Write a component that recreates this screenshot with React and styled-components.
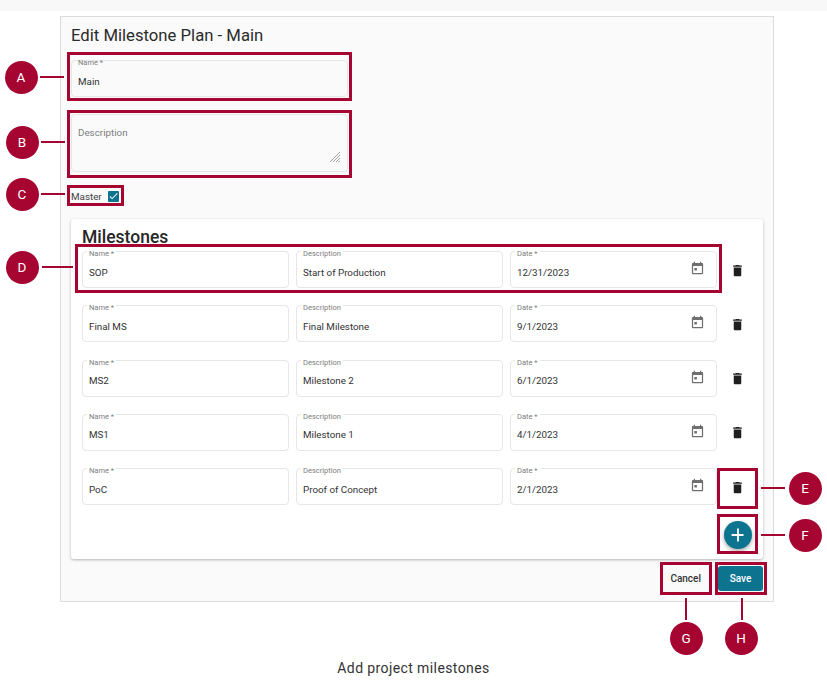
import React from "react";
import styled, { createGlobalStyle } from "styled-components";

const GlobalStyle = createGlobalStyle`
  html, body {
    margin: 0;
    padding: 0;
    background: #ffffff;
    font-family: Roboto, "Liberation Sans", sans-serif;
  }
`;

//data
const milestones = [
  { name: "SOP", description: "Start of Production", date: "12/31/2023" },
  { name: "Final MS", description: "Final Milestone", date: "9/1/2023" },
  { name: "MS2", description: "Milestone 2", date: "6/1/2023" },
  { name: "MS1", description: "Milestone 1", date: "4/1/2023" },
  { name: "PoC", description: "Proof of Concept", date: "2/1/2023" },
];

const frames = [
  { x: 67, y: 52, w: 285, h: 49 },
  { x: 67, y: 110, w: 285, h: 68 },
  { x: 67, y: 185, w: 57, h: 21 },
  { x: 75, y: 244, w: 647, h: 49 },
  { x: 717, y: 468, w: 41, h: 41 },
  { x: 717, y: 514, w: 41, h: 40 },
  { x: 660, y: 562, w: 52, h: 33 },
  { x: 715, y: 562, w: 52, h: 33 },
];

const leaders = [
  { x: 40, y: 76, w: 24, h: 2 },
  { x: 41, y: 141, w: 24, h: 2 },
  { x: 41, y: 193, w: 24, h: 2 },
  { x: 42, y: 266, w: 31, h: 2 },
  { x: 761, y: 487, w: 24, h: 2 },
  { x: 761, y: 534, w: 24, h: 2 },
  { x: 685, y: 598, w: 2, h: 22 },
  { x: 741, y: 598, w: 2, h: 22 },
];

const callouts = [
  { letter: "A", x: 21, y: 77 },
  { letter: "B", x: 22, y: 142 },
  { letter: "C", x: 22, y: 194 },
  { letter: "D", x: 22, y: 267 },
  { letter: "E", x: 805, y: 488 },
  { letter: "F", x: 805, y: 535 },
  { letter: "G", x: 686, y: 638 },
  { letter: "H", x: 741, y: 638 },
];

//icons
const TrashIcon = () => (
  <svg width="15" height="15" viewBox="0 0 24 24" fill="#1f1f1f">
    <path d="M6 19c0 1.1.9 2 2 2h8c1.1 0 2-.9 2-2V7H6v12zM19 4h-3.5l-1-1h-5l-1 1H5v2h14V4z" />
  </svg>
);

const CalendarIcon = () => (
  <svg width="15" height="15" viewBox="0 0 24 24" fill="#6f6f6f">
    <path d="M19 3h-1V1h-2v2H8V1H6v2H5c-1.11 0-1.99.9-1.99 2L3 19c0 1.1.89 2 2 2h14c1.1 0 2-.9 2-2V5c0-1.1-.9-2-2-2zm0 16H5V8h14v11zM7 11h4v4H7z" />
  </svg>
);

const PlusIcon = () => (
  <svg width="22" height="22" viewBox="0 0 24 24" fill="#ffffff">
    <path d="M19 13h-6v6h-2v-6H5v-2h6V5h2v6h5v2z" />
  </svg>
);

const CheckIcon = () => (
  <svg width="12" height="12" viewBox="0 0 24 24" fill="#ffffff">
    <path d="M9 16.17 4.83 12l-1.42 1.41L9 19 21 7l-1.41-1.41z" />
  </svg>
);

const ResizeGrip = () => (
  <svg width="10" height="10" viewBox="0 0 10 10" stroke="#8a8a8a" strokeWidth="0.8">
    <path d="M0 10 10 0M3 10l7-7M6 10l4-4M8.5 10 10 8.5" />
  </svg>
);

const TextField = ({ label, value, trailing }) => (
  <FieldBox>
    <FieldLabel>{label}</FieldLabel>
    <FieldValue>{value}</FieldValue>
    {trailing}
  </FieldBox>
);

const App = () => {
  return (
    <React.Fragment>
      <GlobalStyle />
      <Canvas>
        <TopStrip />
        <Panel>
          <Title>Edit Milestone Plan - Main</Title>
          <PlanFields>
            <TextField label="Name *" value="Main" />
            <DescriptionBox>
              <Placeholder>Description</Placeholder>
              <ResizeGrip />
            </DescriptionBox>
          </PlanFields>
          <MasterRow>
            <span>Master</span>
            <CheckBox>
              <CheckIcon />
            </CheckBox>
          </MasterRow>
          <Card>
            <CardTitle>Milestones</CardTitle>
            <Rows>
              {milestones.map((m) => (
                <Row key={m.name}>
                  <TextField label="Name *" value={m.name} />
                  <TextField label="Description" value={m.description} />
                  <TextField
                    label="Date *"
                    value={m.date}
                    trailing={
                      <DateButton>
                        <CalendarIcon />
                      </DateButton>
                    }
                  />
                  <TrashButton>
                    <TrashIcon />
                  </TrashButton>
                </Row>
              ))}
            </Rows>
            <AddRow>
              <AddButton>
                <PlusIcon />
              </AddButton>
            </AddRow>
          </Card>
          <Footer>
            <CancelButton>Cancel</CancelButton>
            <SaveButton>Save</SaveButton>
          </Footer>
        </Panel>
        <Caption>Add project milestones</Caption>

        {frames.map((f) => (
          <Frame key={`${f.x}-${f.y}`} $x={f.x} $y={f.y} $w={f.w} $h={f.h} />
        ))}
        {leaders.map((l) => (
          <Leader key={`${l.x}-${l.y}`} $x={l.x} $y={l.y} $w={l.w} $h={l.h} />
        ))}
        {callouts.map((c) => (
          <Callout key={c.letter} $x={c.x} $y={c.y}>
            {c.letter}
          </Callout>
        ))}
      </Canvas>
    </React.Fragment>
  );
};

const Canvas = styled.div`
  position: relative;
  width: 827px;
  height: 685px;
  overflow: hidden;
  background: #ffffff;
`;

const TopStrip = styled.div`
  height: 11px;
  background: #f8f8f8;
`;

const Panel = styled.div`
  box-sizing: border-box;
  width: 714px;
  height: 586px;
  margin: 5px 0 0 60px;
  padding: 7px 9px 0 10px;
  background: #fafafa;
  border: 1px solid #dcdcdc;
`;

const Title = styled.h1`
  margin: 0;
  font-size: 16.7px;
  line-height: 24px;
  font-weight: 400;
  color: #2b2b2b;
`;

const PlanFields = styled.div`
  display: flex;
  flex-direction: column;
  gap: 17px;
  width: 277px;
  margin-top: 12px;
`;

const FieldBox = styled.div`
  box-sizing: border-box;
  position: relative;
  display: flex;
  align-items: center;
  height: 37px;
  padding: 5px 12px 0 6px;
  background: inherit;
  border: 1px solid #e6e6e6;
  border-radius: 4px;
`;

const FieldLabel = styled.label`
  position: absolute;
  top: -3px;
  left: 4px;
  padding: 0 2px;
  font-size: 7.5px;
  line-height: 9px;
  color: #7d7d7d;
  background: inherit;
`;

const FieldValue = styled.span`
  flex: 1;
  font-size: 9.8px;
  color: #333333;
`;

const DescriptionBox = styled.div`
  box-sizing: border-box;
  position: relative;
  height: 58px;
  padding: 8px 6px;
  border: 1px solid #e6e6e6;
  border-radius: 4px;
  line-height: 15px;

  svg {
    position: absolute;
    right: 7px;
    bottom: 9px;
  }
`;

const Placeholder = styled.span`
  font-size: 9.8px;
  color: #7d7d7d;
`;

const MasterRow = styled.div`
  display: flex;
  align-items: center;
  gap: 6px;
  height: 20px;
  margin-top: 14px;
  font-size: 9.8px;
  color: #444444;
`;

const CheckBox = styled.span`
  display: flex;
  align-items: center;
  justify-content: center;
  width: 11px;
  height: 11px;
  background: #0d7490;
  border-radius: 1px;
`;

const Card = styled.div`
  box-sizing: border-box;
  width: 692px;
  height: 340px;
  margin-top: 13px;
  padding: 8px 10px 0 11px;
  background: #ffffff;
  border-radius: 3px;
  box-shadow: 0 1px 3px rgba(0, 0, 0, 0.28);
`;

const CardTitle = styled.h2`
  margin: 0;
  font-size: 17.5px;
  line-height: 20px;
  font-weight: 500;
  color: #262626;
`;

const Rows = styled.div`
  display: flex;
  flex-direction: column;
  gap: 17.3px;
  margin-top: 4px;
`;

const Row = styled.div`
  display: grid;
  grid-template-columns: 207px 207px 207px 1fr;
  column-gap: 7px;
  align-items: center;
  background: #ffffff;
`;

const DateButton = styled.span`
  display: flex;
  margin: -7px -1px 0 0;
`;

const TrashButton = styled.span`
  display: flex;
  justify-content: center;
  margin-top: 1px;
  width: 26px;
`;

const AddRow = styled.div`
  display: flex;
  justify-content: flex-end;
  margin-top: 16px;
  padding-right: 1px;
`;

const AddButton = styled.span`
  display: flex;
  align-items: center;
  justify-content: center;
  width: 28px;
  height: 28px;
  background: #0d7490;
  border-radius: 50%;
  box-shadow: 0 2px 4px rgba(0, 0, 0, 0.35);
`;

const Footer = styled.div`
  display: flex;
  justify-content: flex-end;
  align-items: center;
  gap: 17px;
  margin-top: 7px;
  padding-right: 1px;
`;

const CancelButton = styled.span`
  font-size: 10px;
  font-weight: 500;
  color: #333333;
`;

const SaveButton = styled.span`
  display: flex;
  align-items: center;
  justify-content: center;
  width: 45px;
  height: 25px;
  font-size: 10px;
  font-weight: 500;
  color: #ffffff;
  background: #0d7490;
  border-radius: 3px;
`;

const Caption = styled.div`
  margin-top: 57px;
  text-align: center;
  font-size: 14px;
  line-height: 18px;
  letter-spacing: 0.4px;
  color: #333333;
`;

const Frame = styled.div`
  position: absolute;
  box-sizing: border-box;
  left: ${(p) => p.$x}px;
  top: ${(p) => p.$y}px;
  width: ${(p) => p.$w}px;
  height: ${(p) => p.$h}px;
  border: 3px solid #a50530;
`;

const Leader = styled.div`
  position: absolute;
  left: ${(p) => p.$x}px;
  top: ${(p) => p.$y}px;
  width: ${(p) => p.$w}px;
  height: ${(p) => p.$h}px;
  background: #a50530;
`;

const Callout = styled.div`
  position: absolute;
  left: ${(p) => p.$x - 16.5}px;
  top: ${(p) => p.$y - 16.5}px;
  display: flex;
  align-items: center;
  justify-content: center;
  width: 33px;
  height: 33px;
  font-size: 13.5px;
  font-weight: 400;
  color: #ffffff;
  background: #a50530;
  border-radius: 50%;
`;

export default App;
